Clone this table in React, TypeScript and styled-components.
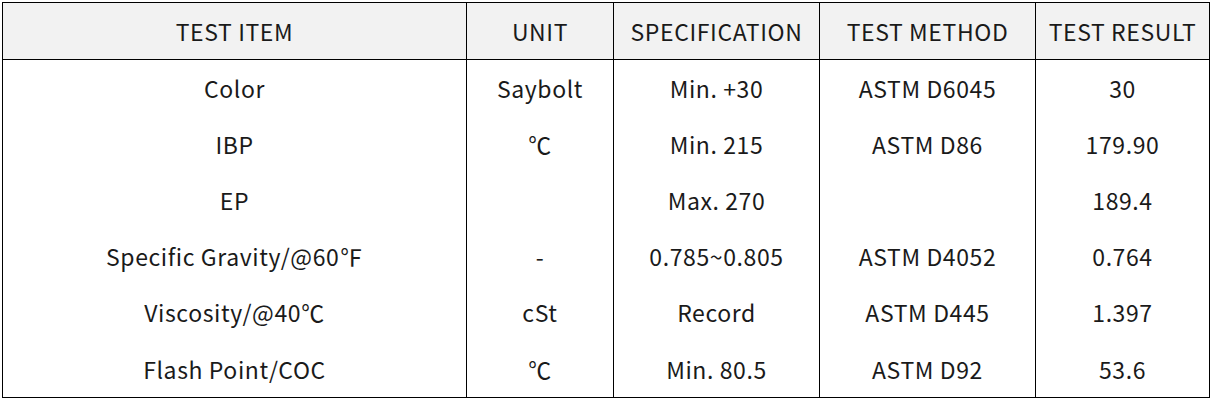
import React from "react";
import styled, { createGlobalStyle } from "styled-components";

const Global = createGlobalStyle`
  html, body { margin: 0; padding: 0; background: #ffffff; }
  body { font-family: "Noto Sans CJK KR", "Noto Sans", sans-serif; color: #1a1a1a; }
`;

const Page = styled.div`
  padding: 2px 0 0 2px;
`;

const Table = styled.table`
  border-collapse: collapse;
  width: 1207px;
  table-layout: fixed;
  border: 1px solid #000;
`;

const HeadCell = styled.th`
  height: 56px;
  padding: 0;
  background: #f2f2f2;
  font-weight: 400;
  font-size: 23px;
  letter-spacing: 0.6px;
  text-align: center;
  vertical-align: middle;
  border-left: 1px solid #000;
  border-bottom: 1px solid #000;
  white-space: nowrap;
`;

const Cell = styled.td<{ $last?: boolean }>`
  height: ${(p) => (p.$last ? 57 : 56)}px;
  padding: 0;
  font-size: 23px;
  letter-spacing: 0.6px;
  text-align: center;
  vertical-align: middle;
  border-left: 1px solid #000;
  white-space: nowrap;
`;

const columns = [
  { label: "TEST ITEM", width: 464 },
  { label: "UNIT", width: 147 },
  { label: "SPECIFICATION", width: 206 },
  { label: "TEST METHOD", width: 216 },
  { label: "TEST RESULT", width: 174 },
];

const rows = [
  ["Color", "Saybolt", "Min. +30", "ASTM D6045", "30"],
  ["IBP", "℃", "Min. 215", "ASTM D86", "179.90"],
  ["EP", "", "Max. 270", "", "189.4"],
  ["Specific Gravity/@60℉", "-", "0.785~0.805", "ASTM D4052", "0.764"],
  ["Viscosity/@40℃", "cSt", "Record", "ASTM D445", "1.397"],
  ["Flash Point/COC", "℃", "Min. 80.5", "ASTM D92", "53.6"],
];

export default function App() {
  return (
    <>
      <Global />
      <Page>
        <Table>
          <colgroup>
            {columns.map((c) => (
              <col key={c.label} style={{ width: c.width }} />
            ))}
          </colgroup>
          <thead>
            <tr>
              {columns.map((c) => (
                <HeadCell key={c.label}>{c.label}</HeadCell>
              ))}
            </tr>
          </thead>
          <tbody>
            {rows.map((r, i) => (
              <tr key={i}>
                {r.map((v, j) => (
                  <Cell key={j} $last={i === rows.length - 1}>
                    {v}
                  </Cell>
                ))}
              </tr>
            ))}
          </tbody>
        </Table>
      </Page>
    </>
  );
}
